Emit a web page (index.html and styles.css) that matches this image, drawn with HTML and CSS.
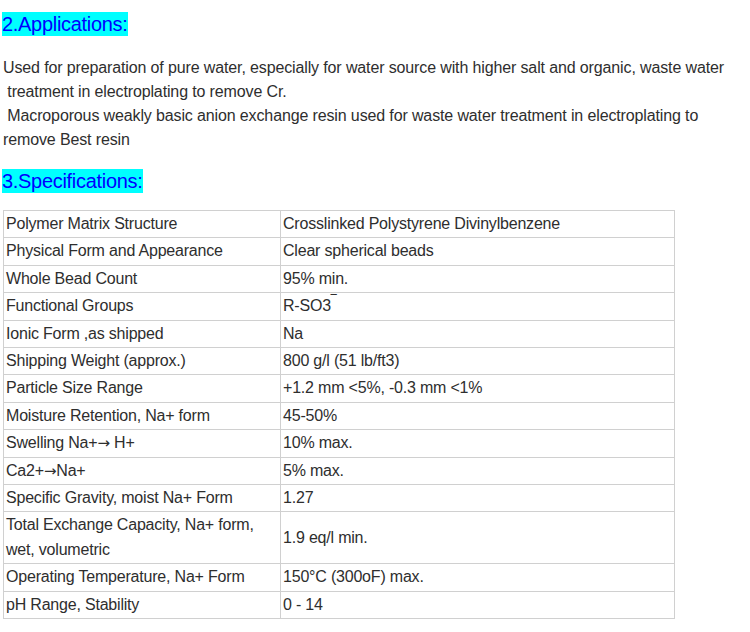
FILE: index.html
```html
<!DOCTYPE html>
<html>
<head>
<meta charset="utf-8">
<link rel="stylesheet" href="styles.css">
</head>
<body>
<div class="page">
  <p class="heading"><span class="mark">2.Applications:</span></p>
  <p class="para">Used for preparation of pure water, especially for water source with higher salt and organic, waste water<br>&nbsp;treatment in electroplating to remove Cr.<br>&nbsp;Macroporous weakly basic anion exchange resin used for waste water treatment in electroplating to<br>remove Best resin</p>
  <p class="heading heading2"><span class="mark">3.Specifications:</span></p>
  <table class="spec">
    <tr><td class="k">Polymer Matrix Structure</td><td>Crosslinked Polystyrene Divinylbenzene</td></tr>
    <tr><td class="k">Physical Form and Appearance</td><td>Clear spherical beads</td></tr>
    <tr><td class="k">Whole Bead Count</td><td>95% min.</td></tr>
    <tr><td class="k">Functional Groups</td><td>R-SO3<span class="sup">&#8254;</span></td></tr>
    <tr><td class="k">Ionic Form ,as shipped</td><td>Na</td></tr>
    <tr><td class="k">Shipping Weight (approx.)</td><td>800 g/l (51 lb/ft3)</td></tr>
    <tr><td class="k">Particle Size Range</td><td>+1.2 mm &lt;5%, -0.3 mm &lt;1%</td></tr>
    <tr><td class="k">Moisture Retention, Na+ form</td><td>45-50%</td></tr>
    <tr><td class="k">Swelling Na+<span class="arrow">&#8594;</span> H+</td><td>10% max.</td></tr>
    <tr><td class="k">Ca2+<span class="arrow">&#8594;</span>Na+</td><td>5% max.</td></tr>
    <tr><td class="k">Specific Gravity, moist Na+ Form</td><td>1.27</td></tr>
    <tr><td class="k">Total Exchange Capacity, Na+ form, wet, volumetric</td><td>1.9 eq/l min.</td></tr>
    <tr><td class="k">Operating Temperature, Na+ Form</td><td>150°C (300oF) max.</td></tr>
    <tr><td class="k">pH Range, Stability</td><td>0 - 14</td></tr>
  </table>
</div>
</body>
</html>
```
FILE: styles.css
```css
html, body {
  margin: 0;
  padding: 0;
  background: #ffffff;
}
.page {
  padding: 0 0 0 3px;
  font-family: "Liberation Sans", Arial, sans-serif;
  color: #2e2e2e;
}
.heading {
  margin: 12px 0 0 -1px;
  font-size: 20px;
  line-height: 24px;
  letter-spacing: -0.3px;
}
.mark {
  background: #00ffff;
  color: #0000ff;
  padding: 1px 0;
}
.heading2 {
  margin-top: 0;
}
.para {
  margin: 20px 0 17px 0;
  font-size: 16px;
  line-height: 24px;
  letter-spacing: -0.13px;
  white-space: nowrap;
}
.spec {
  margin-top: 17px;
  border-collapse: collapse;
  width: 672px;
  font-size: 16px;
  letter-spacing: -0.2px;
}
.spec td {
  border: 1px solid #d0d0d0;
  padding: 1px 2px;
  line-height: 24.4px;
  vertical-align: middle;
}
.spec td.k {
  width: 272px;
}
.arrow {
  font-family: "DejaVu Sans", sans-serif;
  font-size: 15px;
  line-height: 1;
}
.sup {
  position: relative;
  top: -4px;
}
```
